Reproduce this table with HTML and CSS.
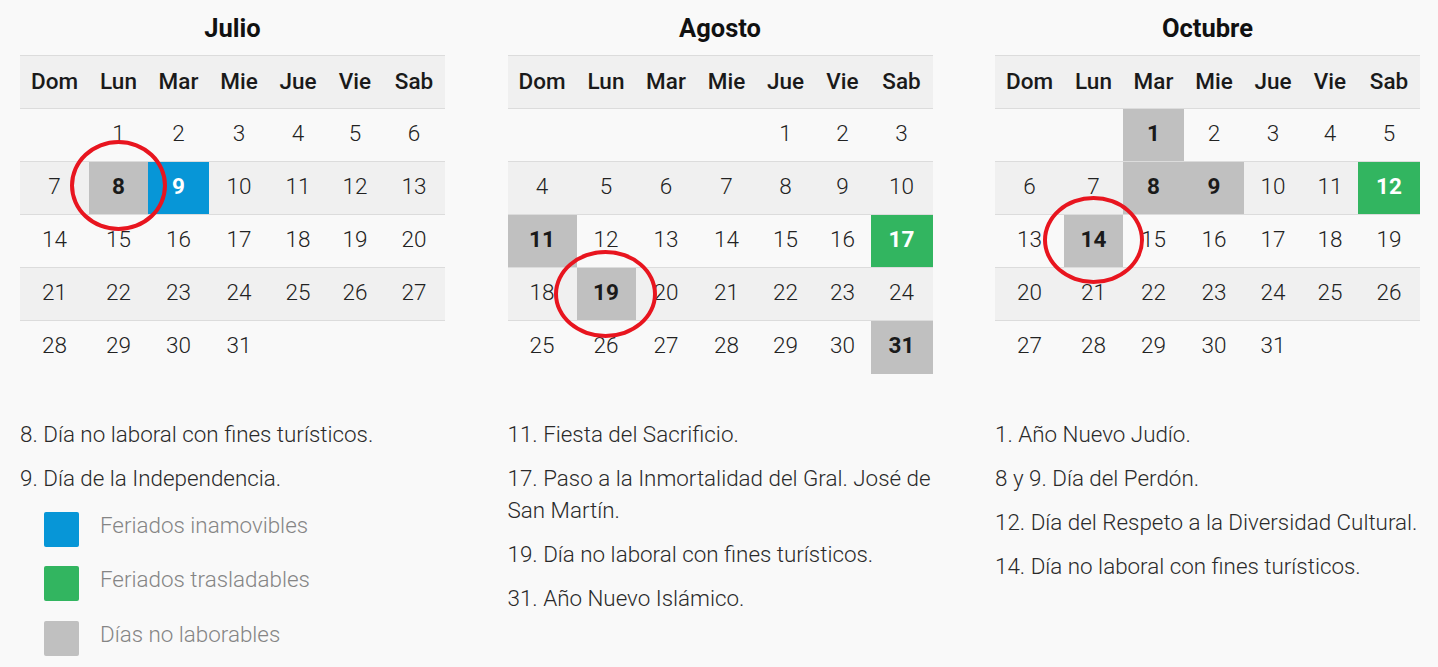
FILE: index.html
```html
<!DOCTYPE html>
<html lang="es">
<head>
<meta charset="utf-8">
<title>Feriados</title>
<link rel="stylesheet" href="styles.css">
</head>
<body>
<main class="months">
  <section class="month">
    <h2 class="month-title">Julio</h2>
    <table class="cal">
      <colgroup><col class="c-dom"><col class="c-lun"><col class="c-mar"><col class="c-mie"><col class="c-jue"><col class="c-vie"><col class="c-sab"></colgroup>
      <thead><tr><th>Dom</th><th>Lun</th><th>Mar</th><th>Mie</th><th>Jue</th><th>Vie</th><th>Sab</th></tr></thead>
      <tbody>
        <tr><td></td><td>1</td><td>2</td><td>3</td><td>4</td><td>5</td><td>6</td></tr>
        <tr><td>7</td><td class="nolab">8</td><td class="inam">9</td><td>10</td><td>11</td><td>12</td><td>13</td></tr>
        <tr><td>14</td><td>15</td><td>16</td><td>17</td><td>18</td><td>19</td><td>20</td></tr>
        <tr><td>21</td><td>22</td><td>23</td><td>24</td><td>25</td><td>26</td><td>27</td></tr>
        <tr><td>28</td><td>29</td><td>30</td><td>31</td><td></td><td></td><td></td></tr>
      </tbody>
    </table>
    <span class="circle circle-jul"></span>
    <div class="notes">
      <p>8. Día no laboral con fines turísticos.</p>
      <p>9. Día de la Independencia.</p>
    </div>
    <ul class="legend">
      <li><span class="swatch swatch-blue"></span>Feriados inamovibles</li>
      <li><span class="swatch swatch-green"></span>Feriados trasladables</li>
      <li><span class="swatch swatch-gray"></span>Días no laborables</li>
    </ul>
  </section>

  <section class="month">
    <h2 class="month-title">Agosto</h2>
    <table class="cal">
      <colgroup><col class="c-dom"><col class="c-lun"><col class="c-mar"><col class="c-mie"><col class="c-jue"><col class="c-vie"><col class="c-sab"></colgroup>
      <thead><tr><th>Dom</th><th>Lun</th><th>Mar</th><th>Mie</th><th>Jue</th><th>Vie</th><th>Sab</th></tr></thead>
      <tbody>
        <tr><td></td><td></td><td></td><td></td><td>1</td><td>2</td><td>3</td></tr>
        <tr><td>4</td><td>5</td><td>6</td><td>7</td><td>8</td><td>9</td><td>10</td></tr>
        <tr><td class="nolab">11</td><td>12</td><td>13</td><td>14</td><td>15</td><td>16</td><td class="trasl">17</td></tr>
        <tr><td>18</td><td class="nolab">19</td><td>20</td><td>21</td><td>22</td><td>23</td><td>24</td></tr>
        <tr><td>25</td><td>26</td><td>27</td><td>28</td><td>29</td><td>30</td><td class="nolab">31</td></tr>
      </tbody>
    </table>
    <span class="circle circle-ago"></span>
    <div class="notes">
      <p>11. Fiesta del Sacrificio.</p>
      <p>17. Paso a la Inmortalidad del Gral. José de San Martín.</p>
      <p>19. Día no laboral con fines turísticos.</p>
      <p>31. Año Nuevo Islámico.</p>
    </div>
  </section>

  <section class="month">
    <h2 class="month-title">Octubre</h2>
    <table class="cal">
      <colgroup><col class="c-dom"><col class="c-lun"><col class="c-mar"><col class="c-mie"><col class="c-jue"><col class="c-vie"><col class="c-sab"></colgroup>
      <thead><tr><th>Dom</th><th>Lun</th><th>Mar</th><th>Mie</th><th>Jue</th><th>Vie</th><th>Sab</th></tr></thead>
      <tbody>
        <tr><td></td><td></td><td class="nolab">1</td><td>2</td><td>3</td><td>4</td><td>5</td></tr>
        <tr><td>6</td><td>7</td><td class="nolab">8</td><td class="nolab">9</td><td>10</td><td>11</td><td class="trasl">12</td></tr>
        <tr><td>13</td><td class="nolab">14</td><td>15</td><td>16</td><td>17</td><td>18</td><td>19</td></tr>
        <tr><td>20</td><td>21</td><td>22</td><td>23</td><td>24</td><td>25</td><td>26</td></tr>
        <tr><td>27</td><td>28</td><td>29</td><td>30</td><td>31</td><td></td><td></td></tr>
      </tbody>
    </table>
    <span class="circle circle-oct"></span>
    <div class="notes">
      <p>1. Año Nuevo Judío.</p>
      <p>8 y 9. Día del Perdón.</p>
      <p>12. Día del Respeto a la Diversidad Cultural.</p>
      <p>14. Día no laboral con fines turísticos.</p>
    </div>
  </section>
</main>
</body>
</html>
```

FILE: styles.css
```css
* { box-sizing: border-box; }

html, body {
  margin: 0;
  padding: 0;
  background: #f9f9f9;
  font-family: Roboto, "Liberation Sans", sans-serif;
  color: #222;
}

.months {
  display: grid;
  grid-template-columns: repeat(3, 425px);
  justify-content: space-between;
  padding: 0 18px 0 20px;
}

.month {
  position: relative;
}

.month-title {
  margin: 0;
  height: 55px;
  line-height: 57px;
  text-align: center;
  font-size: 25.5px;
  font-weight: 700;
  color: #111;
}

.cal {
  width: 425px;
  border-collapse: collapse;
  table-layout: fixed;
}

.c-dom { width: 69px; }
.c-lun { width: 59px; }
.c-mar { width: 61px; }
.c-mie { width: 60px; }
.c-jue { width: 58px; }
.c-vie { width: 56px; }
.c-sab { width: 62px; }

.cal th,
.cal td {
  height: 53px;
  padding: 0 0 4px;
  text-align: center;
  font-size: 22.5px;
  border-top: 1px solid #dcdcdc;
}

.cal th {
  padding-bottom: 3px;
  font-weight: 500;
  background: #f0f0f0;
  color: #1a1a1a;
}

.cal td {
  font-weight: 300;
  color: #222;
}

.cal tbody tr:nth-child(even) td {
  background: #f0f0f0;
}

.cal td.nolab,
.cal tbody tr:nth-child(even) td.nolab {
  background: #c0c0c0;
  font-weight: 700;
  color: #1a1a1a;
}

.cal td.inam,
.cal tbody tr:nth-child(even) td.inam {
  background: #0796d7;
  color: #fff;
  font-weight: 700;
}

.cal td.trasl,
.cal tbody tr:nth-child(even) td.trasl {
  background: #32b560;
  color: #fff;
  font-weight: 700;
}

.circle {
  position: absolute;
  border: 4px solid #e8151f;
  border-radius: 50%;
  pointer-events: none;
}

.circle-jul { left: 50px; top: 140px; width: 97px; height: 91px; }
.circle-ago { left: 46px; top: 250px; width: 103px; height: 88px; }
.circle-oct { left: 48px; top: 196px; width: 101px; height: 88px; }

.notes {
  margin-top: 44px;
}

.notes p {
  margin: 0 0 12px;
  font-size: 22.4px;
  font-weight: 300;
  line-height: 32px;
  color: #2a2a2a;
}

.legend {
  list-style: none;
  margin: 18px 0 0;
  padding: 0 0 0 24px;
}

.legend li {
  display: flex;
  align-items: flex-start;
  gap: 21px;
  height: 35px;
  margin-bottom: 19.5px;
  font-size: 22.4px;
  font-weight: 300;
  line-height: 27px;
  color: #858585;
}

.swatch {
  flex: none;
  width: 35px;
  height: 35px;
  border-radius: 2px;
}

.swatch-blue { background: #0796d7; }
.swatch-green { background: #32b560; }
.swatch-gray { background: #c0c0c0; }
```
